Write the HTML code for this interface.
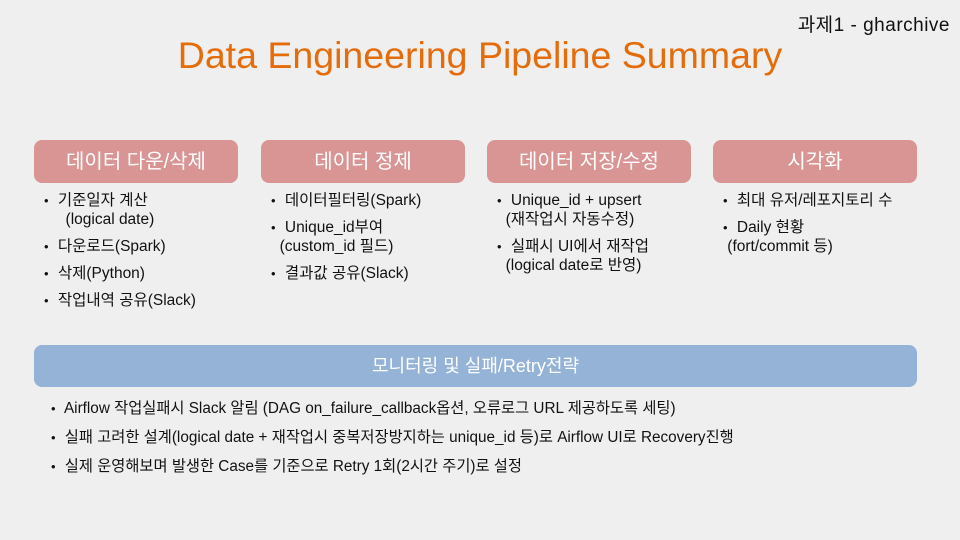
<!DOCTYPE html>
<html><head><meta charset="utf-8"><style>
*{margin:0;padding:0;box-sizing:border-box}
body{width:960px;height:540px;overflow:hidden;background:#efefef;font-family:"Liberation Sans","Noto Sans CJK KR",sans-serif;position:relative;color:#111}
.a{position:absolute;white-space:nowrap}
.tag{top:10px;right:10px;font-size:19px;letter-spacing:0.5px;color:#111}
h1{position:absolute;top:34px;left:0;width:960px;text-align:center;font-weight:normal;font-size:37.5px;color:#e46c0a}
.box{position:absolute;top:140px;height:43px;background:#d99594;border-radius:8px;color:#fff;font-size:20px;text-align:center;line-height:44px}
.blue{position:absolute;left:34px;top:345px;width:883px;height:42px;background:#95b3d7;border-radius:8px;color:#fff;font-size:18px;text-align:center;line-height:43px}
.l{position:absolute;font-size:15.5px;line-height:19px;white-space:nowrap}
.l div{margin-bottom:8px}
.b{font-size:13px;line-height:13px;margin-right:5px}
.m{position:absolute;left:51px;top:394px;font-size:15.3px;line-height:29px;white-space:nowrap}
</style></head><body>
<div class="a tag">과제1 - gharchive</div>
<h1>Data Engineering Pipeline Summary</h1>
<div class="box" style="left:34px;width:204px">데이터 다운/삭제</div>
<div class="box" style="left:261px;width:204px">데이터 정제</div>
<div class="box" style="left:487px;width:204px">데이터 저장/수정</div>
<div class="box" style="left:713px;width:204px">시각화</div>
<div class="l" style="left:44px;top:191px">
<div><span class="b">•</span> 기준일자 계산<br>&nbsp;&nbsp;&nbsp;&nbsp;&nbsp;(logical date)</div>
<div><span class="b">•</span> 다운로드(Spark)</div>
<div><span class="b">•</span> 삭제(Python)</div>
<div><span class="b">•</span> 작업내역 공유(Slack)</div>
</div>
<div class="l" style="left:271px;top:191px">
<div><span class="b">•</span> 데이터필터링(Spark)</div>
<div><span class="b">•</span> Unique_id부여<br>&nbsp;&nbsp;(custom_id 필드)</div>
<div><span class="b">•</span> 결과값 공유(Slack)</div>
</div>
<div class="l" style="left:497px;top:191px">
<div><span class="b">•</span> Unique_id + upsert<br>&nbsp;&nbsp;(재작업시 자동수정)</div>
<div><span class="b">•</span> 실패시 UI에서 재작업<br>&nbsp;&nbsp;(logical date로 반영)</div>
</div>
<div class="l" style="left:723px;top:191px">
<div><span class="b">•</span> 최대 유저/레포지토리 수</div>
<div><span class="b">•</span> Daily 현황<br>&nbsp;(fort/commit 등)</div>
</div>
<div class="blue">모니터링 및 실패/Retry전략</div>
<div class="m">
<div><span class="b">•</span> Airflow 작업실패시 Slack 알림 (DAG on_failure_callback옵션, 오류로그 URL 제공하도록 세팅)</div>
<div><span class="b">•</span> 실패 고려한 설계(logical date + 재작업시 중복저장방지하는 unique_id 등)로 Airflow UI로 Recovery진행</div>
<div><span class="b">•</span> 실제 운영해보며 발생한 Case를 기준으로 Retry 1회(2시간 주기)로 설정</div>
</div>
</body></html>
